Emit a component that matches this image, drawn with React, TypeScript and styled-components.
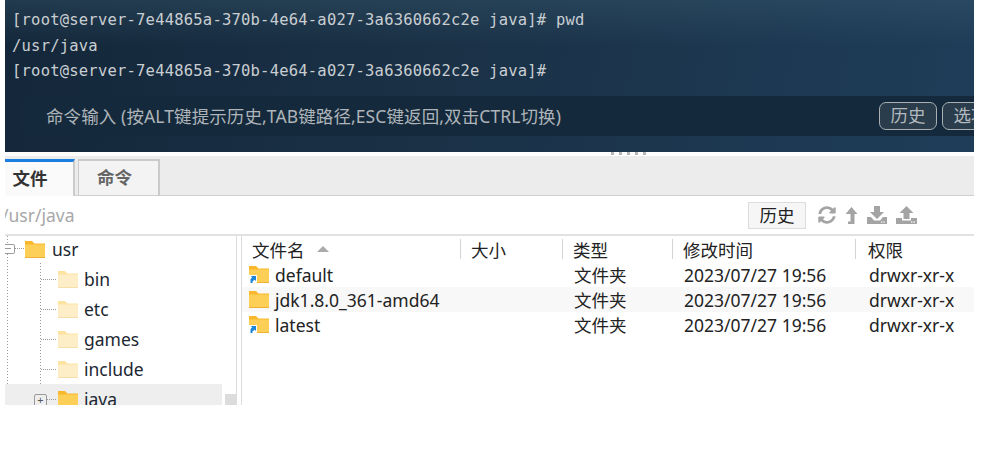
import React from 'react';
import styled, { createGlobalStyle } from 'styled-components';
import { FaSyncAlt } from 'react-icons/fa';

const GlobalStyle = createGlobalStyle`
    html, body {
        margin: 0;
        padding: 0;
        background: #fff;
    }
`;

const UI_FONT = `"Noto Sans", "Noto Sans CJK SC", sans-serif`;

const files = [
    { name: 'default', link: true, stripe: false },
    { name: 'jdk1.8.0_361-amd64', link: false, stripe: true },
    { name: 'latest', link: true, stripe: false },
];

const treeItems = ['bin', 'etc', 'games', 'include'];

const columns = [
    { label: '文件名', width: 219, sort: true },
    { label: '大小', width: 102, sort: false },
    { label: '类型', width: 110, sort: false },
    { label: '修改时间', width: 183, sort: false },
    { label: '权限', width: 118, sort: false },
];

const FolderIcon = ({ pale, link }: { pale?: boolean; link?: boolean }) => (
    <svg width="20" height="17" viewBox="0 0 20 17" style={{ flex: 'none' }}>
        <path d="M0 0h7l2.5 2.5H20V5H0z" fill={pale ? '#fde3a0' : '#f9b82b'} />
        <rect x="0" y="3.5" width="20" height="13.5" rx="1" fill={pale ? '#fdeec8' : '#fdcf56'} />
        <rect x="0" y="16" width="20" height="1" fill={pale ? '#f5dfa8' : '#eeb035'} />
        {link && (
            <>
                <rect x="0" y="9" width="8" height="8" fill="#fff" />
                <path d="M1.5 17v-4l1.6-1.4L1.9 10H7v5l-1.4-1.3L3.5 15.6V17z" fill="#1f86d8" />
            </>
        )}
    </svg>
);

const UpArrow = () => (
    <svg width="13" height="17" viewBox="0 0 13 17">
        <path d="M6.5 0L12.5 7H9.5v10H3v-2.5h2.5V7H.5z" fill="#a4a4a4" />
    </svg>
);

const TrayDown = () => (
    <svg width="20" height="18" viewBox="0 0 20 18">
        <path d="M7 0h6v6h4l-7 7-7-7h4z" fill="#a4a4a4" />
        <path d="M0 11h4l3 3.5h6l3-3.5h4v7H0z" fill="#a4a4a4" />
        <rect x="14" y="15.5" width="1.4" height="1.2" fill="#fff" />
        <rect x="16.5" y="15.5" width="1.4" height="1.2" fill="#fff" />
    </svg>
);

const TrayUp = () => (
    <svg width="21" height="18" viewBox="0 0 21 18">
        <path d="M10.5 0l7 7h-4v6h-6V7h-4z" fill="#a4a4a4" />
        <path d="M0 12h6v2.5h9V12h6v6H0z" fill="#a4a4a4" />
        <rect x="15" y="15.5" width="1.4" height="1.2" fill="#fff" />
        <rect x="17.5" y="15.5" width="1.4" height="1.2" fill="#fff" />
    </svg>
);

export default function App() {
    return (
        <>
            <GlobalStyle />
            <Page>
                <Terminal>
                    <Output>
                        <div>[root@server-7e44865a-370b-4e64-a027-3a6360662c2e java]# pwd</div>
                        <div>/usr/java</div>
                        <div>[root@server-7e44865a-370b-4e64-a027-3a6360662c2e java]#</div>
                    </Output>
                    <CommandBar>
                        <CommandHint>命令输入 (按ALT键提示历史,TAB键路径,ESC键返回,双击CTRL切换)</CommandHint>
                        <GhostButton>历史</GhostButton>
                        <GhostButton>选项</GhostButton>
                    </CommandBar>
                </Terminal>
                <Splitter>
                    <i /><i /><i /><i /><i />
                </Splitter>
                <TabBar>
                    <Tab $active>文件</Tab>
                    <Tab>命令</Tab>
                </TabBar>
                <PathBar>
                    <PathText>/usr/java</PathText>
                    <HistoryButton>历史</HistoryButton>
                    <Tools>
                        <FaSyncAlt size={18} color="#a4a4a4" />
                        <UpArrow />
                        <TrayDown />
                        <TrayUp />
                    </Tools>
                </PathBar>
                <Panes>
                    <TreePane>
                        <Tree>
                            <RootRow>
                                <Expander />
                                <FolderIcon />
                                <TreeLabel>usr</TreeLabel>
                            </RootRow>
                            {treeItems.map((name) => (
                                <TreeRow key={name}>
                                    <FolderIcon pale />
                                    <TreeLabel>{name}</TreeLabel>
                                </TreeRow>
                            ))}
                            <TreeRow $selected>
                                <PlusBox>+</PlusBox>
                                <FolderIcon />
                                <TreeLabel>java</TreeLabel>
                            </TreeRow>
                        </Tree>
                        <ScrollTrack>
                            <ScrollThumb />
                        </ScrollTrack>
                    </TreePane>
                    <ListPane>
                        <HeaderRow>
                            {columns.map((col) => (
                                <HeaderCell key={col.label} $width={col.width}>
                                    {col.label}
                                    {col.sort && <SortArrow />}
                                </HeaderCell>
                            ))}
                        </HeaderRow>
                        {files.map((file) => (
                            <FileRow key={file.name} $stripe={file.stripe}>
                                <NameCell>
                                    <FolderIcon link={file.link} />
                                    {file.name}
                                </NameCell>
                                <TypeCell>文件夹</TypeCell>
                                <TimeCell>2023/07/27 19:56</TimeCell>
                                <PermCell>drwxr-xr-x</PermCell>
                            </FileRow>
                        ))}
                    </ListPane>
                </Panes>
            </Page>
        </>
    );
}

const Page = styled.div`
    width: 969px;
    height: 405px;
    margin-left: 5px;
    overflow: hidden;
    display: flex;
    flex-direction: column;
    font-family: ${UI_FONT};
    color: #222;
`;

const Terminal = styled.div`
    height: 152px;
    flex: none;
    box-sizing: border-box;
    padding-top: 8px;
    overflow: hidden;
    background:
        linear-gradient(180deg, rgba(60, 95, 115, 0.35) 0%, rgba(60, 95, 115, 0) 30%),
        linear-gradient(100deg, #14273a 0%, #1a3146 45%, #1f3d59 100%);
`;

const Output = styled.div`
    padding-left: 7px;
    font-family: "DejaVu Sans Mono", monospace;
    font-size: 15.5px;
    letter-spacing: 0.21px;
    line-height: 25.5px;
    color: #c9ced2;
    white-space: pre;
`;

const CommandBar = styled.div`
    display: flex;
    align-items: center;
    gap: 5px;
    height: 40px;
    margin: 11px 0 0 16px;
    padding-left: 25px;
    border-radius: 8px 0 0 8px;
    background: #14293b;
    white-space: nowrap;
`;

const CommandHint = styled.div`
    width: 828px;
    flex: none;
    font-size: 17.5px;
    letter-spacing: 0.1px;
    color: #aeb4b9;
`;

const GhostButton = styled.div`
    flex: none;
    box-sizing: border-box;
    width: 58px;
    height: 28px;
    border: 1px solid #a9afb3;
    border-radius: 7px;
    text-align: center;
    line-height: 24px;
    font-size: 17.5px;
    color: #b4b9bd;
    background: #2a3d4c;
`;

const Splitter = styled.div`
    height: 4px;
    flex: none;
    display: flex;
    gap: 5px;
    padding-left: 606px;
    background: #fff;
    i {
        width: 3px;
        height: 3px;
        background: #b5b5b5;
    }
`;

const TabBar = styled.div`
    height: 40px;
    flex: none;
    box-sizing: border-box;
    display: flex;
    align-items: flex-end;
    gap: 3px;
    background: #ececec;
    border-bottom: 1px solid #cfcfcf;
`;

const Tab = styled.div<{ $active?: boolean }>`
    box-sizing: border-box;
    width: ${(p) => (p.$active ? '70px' : '82px')};
    height: ${(p) => (p.$active ? '37px' : '36px')};
    text-align: center;
    font-size: 17.5px;
    font-weight: 700;
    color: ${(p) => (p.$active ? '#333' : '#666')};
    line-height: 33px;
    background: ${(p) => (p.$active ? '#fafafa' : '#f3f3f3')};
    border-top: ${(p) => (p.$active ? '3px solid #1a7fe0' : '2px solid #cacaca')};
    border-right: 2px solid #cacaca;
    border-left: ${(p) => (p.$active ? 'none' : '1px solid #cacaca')};
    margin-bottom: ${(p) => (p.$active ? '-1px' : '0')};
    padding-right: ${(p) => (p.$active ? '18px' : '8px')};
`;

const PathBar = styled.div`
    height: 40px;
    flex: none;
    box-sizing: border-box;
    display: flex;
    align-items: center;
    border-bottom: 2px solid #e2e2e2;
    background: #fff;
`;

const PathText = styled.div`
    width: 746px;
    flex: none;
    font-size: 17.5px;
    color: #a8a8a8;
    margin-left: -3px;
`;

const HistoryButton = styled.div`
    box-sizing: border-box;
    width: 58px;
    height: 27px;
    flex: none;
    border: 1px solid #dcdcdc;
    background: #f6f6f6;
    font-size: 17.5px;
    text-align: center;
    line-height: 24px;
    color: #222;
`;

const Tools = styled.div`
    display: flex;
    align-items: center;
    gap: 9px;
    margin-left: 12px;
`;

const Panes = styled.div`
    flex: 1;
    min-height: 0;
    display: flex;
    gap: 4px;
`;

const TreePane = styled.div`
    width: 232px;
    flex: none;
    display: flex;
    border-right: 1px solid #dcdcdc;
    box-sizing: border-box;
    overflow: hidden;
`;

const Tree = styled.div`
    flex: 1;
    background-image:
        repeating-linear-gradient(#9a9a9a 0 1px, transparent 1px 3px),
        repeating-linear-gradient(#9a9a9a 0 1px, transparent 1px 3px);
    background-size: 1px 100%, 1px 100%;
    background-position: 35px 27px, 2px 0;
    background-repeat: no-repeat;
`;

const RootRow = styled.div`
    height: 28px;
    box-sizing: border-box;
    padding: 0 0 2px 20px;
    display: flex;
    align-items: center;
    gap: 7px;
    position: relative;
`;

const Expander = styled.span`
    position: absolute;
    left: 0;
    top: 8px;
    width: 10px;
    height: 10px;
    box-sizing: border-box;
    border: 1px solid #9a9a9a;
    border-left: none;
    border-radius: 0 2px 2px 0;
    background: #fff;
    &::before {
        content: '';
        position: absolute;
        left: 0;
        top: 3px;
        width: 6px;
        height: 1px;
        background: #9a9a9a;
    }
    &::after {
        content: '';
        position: absolute;
        left: 10px;
        top: 3px;
        width: 9px;
        border-top: 1px dotted #9a9a9a;
    }
`;

const TreeRow = styled.div<{ $selected?: boolean }>`
    height: 30px;
    display: flex;
    align-items: center;
    gap: 6px;
    padding-left: 53px;
    position: relative;
    background: ${(p) => (p.$selected ? '#eeeeee' : 'transparent')};
    &::before {
        content: '';
        position: absolute;
        left: 36px;
        top: 50%;
        width: 15px;
        border-top: 1px dotted #9a9a9a;
    }
`;

const PlusBox = styled.span`
    position: absolute;
    z-index: 1;
    left: 29px;
    top: 10px;
    width: 13px;
    height: 13px;
    box-sizing: border-box;
    border: 1px solid #9a9a9a;
    border-radius: 2px;
    background: #eee;
    font-size: 11px;
    line-height: 10px;
    text-align: center;
    color: #555;
`;

const TreeLabel = styled.span`
    font-size: 17.5px;
    color: #1c2733;
`;

const ScrollTrack = styled.div`
    width: 14px;
    flex: none;
    background: #fff;
    position: relative;
`;

const ScrollThumb = styled.div`
    position: absolute;
    left: 3px;
    right: 0;
    top: 158px;
    bottom: 0;
    background: #dcdcdc;
`;

const ListPane = styled.div`
    flex: 1;
    min-width: 0;
    border-left: 1px solid #dcdcdc;
    overflow: hidden;
`;

const HeaderRow = styled.div`
    height: 26px;
    display: flex;
    align-items: center;
`;

const HeaderCell = styled.div<{ $width: number }>`
    width: ${(p) => p.$width}px;
    flex: none;
    box-sizing: border-box;
    height: 20px;
    display: flex;
    align-items: center;
    gap: 12px;
    padding-left: 10px;
    font-size: 17.5px;
    color: #222;
    border-right: 1px solid #d4d4d4;
    &:last-child {
        border-right: none;
        padding-left: 12px;
    }
`;

const SortArrow = styled.span`
    width: 0;
    height: 0;
    border-left: 6px solid transparent;
    border-right: 6px solid transparent;
    border-bottom: 6px solid #aaa;
`;

const FileRow = styled.div<{ $stripe: boolean }>`
    height: 25px;
    display: flex;
    align-items: center;
    font-size: 17.5px;
    color: #222;
    background: ${(p) => (p.$stripe ? '#f8f8f8' : 'transparent')};
`;

const NameCell = styled.div`
    width: 332px;
    flex: none;
    box-sizing: border-box;
    display: flex;
    align-items: center;
    gap: 6px;
    padding-left: 7px;
`;

const TypeCell = styled.div`
    width: 110px;
    flex: none;
`;

const TimeCell = styled.div`
    width: 185px;
    flex: none;
`;

const PermCell = styled.div`
    flex: none;
`;
